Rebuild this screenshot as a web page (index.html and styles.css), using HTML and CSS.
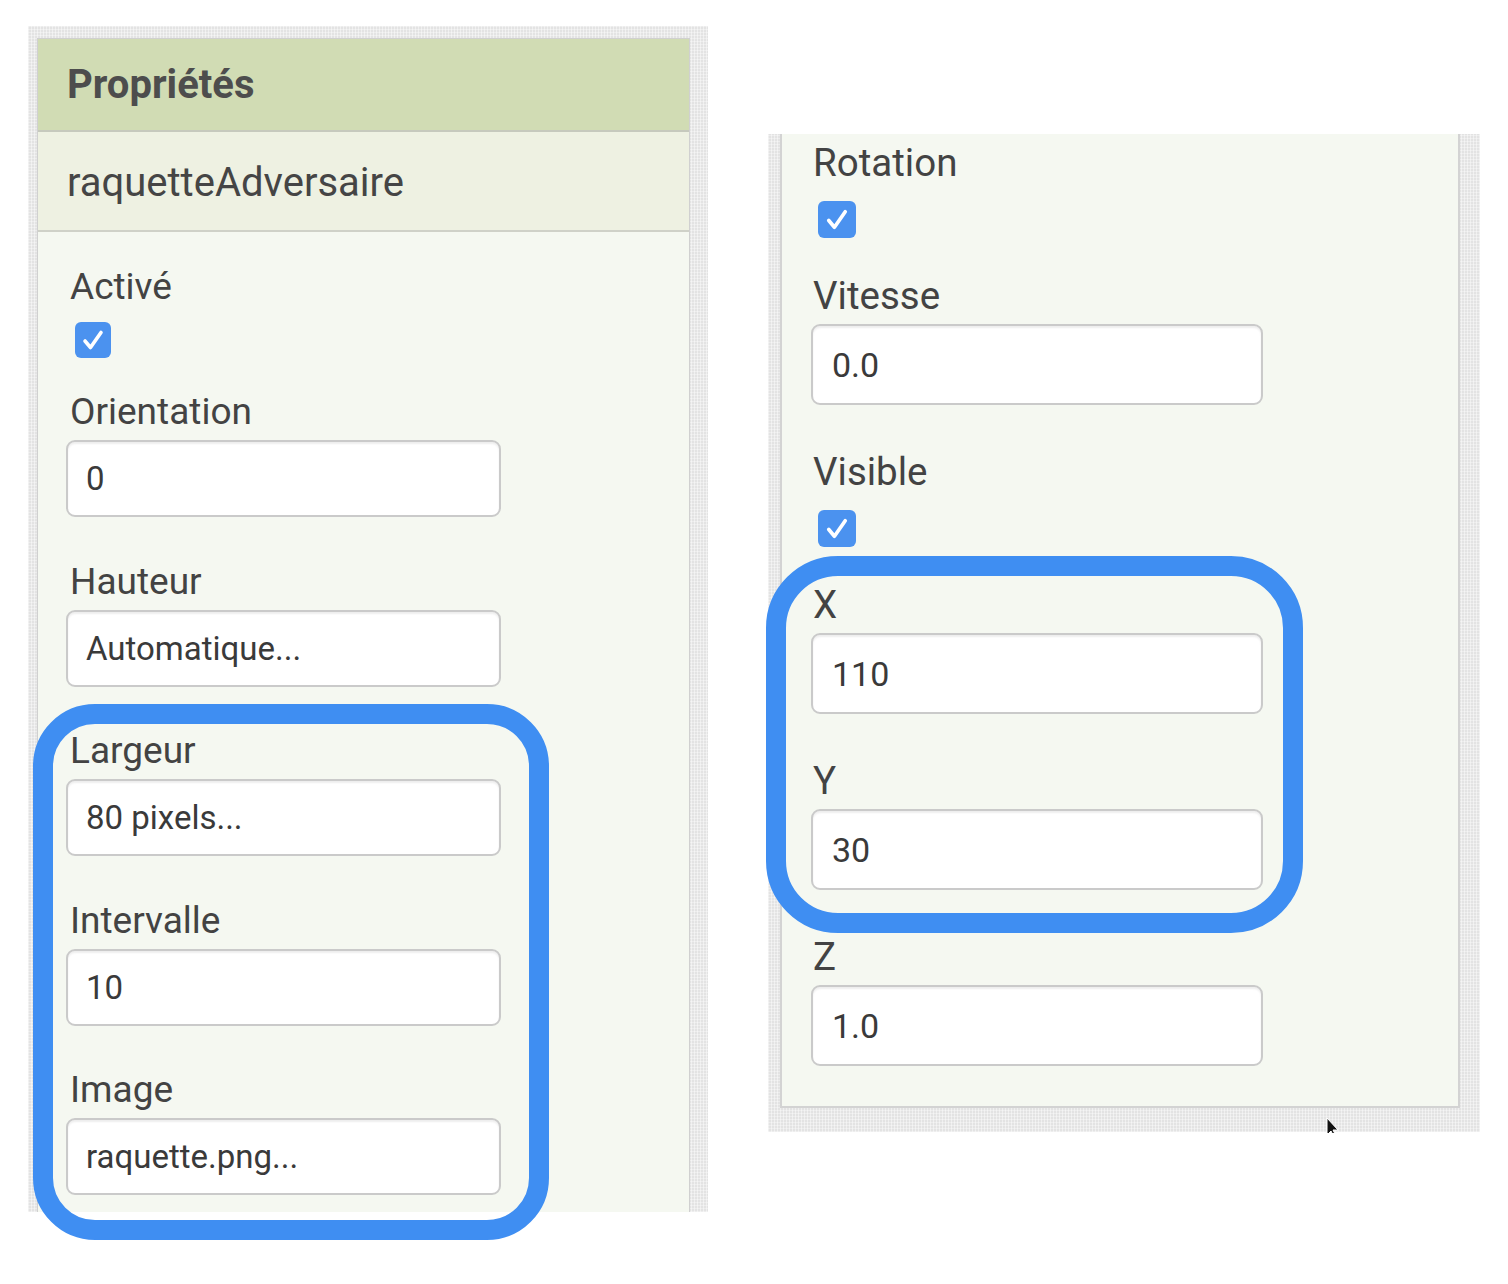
FILE: index.html
```html
<!DOCTYPE html>
<html lang="fr">
<head>
<meta charset="utf-8">
<title>Propriétés</title>
<link rel="stylesheet" href="styles.css">
</head>
<body>
<div class="page">
  <section class="frame frame-left">
    <div class="panel panel-left">
      <div class="panel-head">Propriétés</div>
      <div class="panel-sub">raquetteAdversaire</div>
      <div class="panel-body">
        <div class="field cb-field">
          <div class="label">Activé</div>
          <span class="checkbox"><svg viewBox="0 0 36 36"><path d="M10 19 L15.5 25.5 L26 10.5"/></svg></span>
        </div>
        <div class="field in-field">
          <div class="label">Orientation</div>
          <div class="input">0</div>
        </div>
        <div class="field in-field">
          <div class="label">Hauteur</div>
          <div class="input">Automatique...</div>
        </div>
        <div class="field in-field">
          <div class="label">Largeur</div>
          <div class="input">80 pixels...</div>
        </div>
        <div class="field in-field">
          <div class="label">Intervalle</div>
          <div class="input">10</div>
        </div>
        <div class="field in-field">
          <div class="label">Image</div>
          <div class="input">raquette.png...</div>
        </div>
      </div>
    </div>
  </section>

  <section class="frame frame-right">
    <div class="panel panel-right">
      <div class="panel-body">
        <div class="field cb-field">
          <div class="label">Rotation</div>
          <span class="checkbox"><svg viewBox="0 0 36 36"><path d="M10 19 L15.5 25.5 L26 10.5"/></svg></span>
        </div>
        <div class="field in-field">
          <div class="label">Vitesse</div>
          <div class="input">0.0</div>
        </div>
        <div class="field cb-field">
          <div class="label">Visible</div>
          <span class="checkbox"><svg viewBox="0 0 36 36"><path d="M10 19 L15.5 25.5 L26 10.5"/></svg></span>
        </div>
        <div class="field in-field">
          <div class="label">X</div>
          <div class="input">110</div>
        </div>
        <div class="field in-field">
          <div class="label">Y</div>
          <div class="input">30</div>
        </div>
        <div class="field in-field last">
          <div class="label">Z</div>
          <div class="input">1.0</div>
        </div>
      </div>
    </div>
  </section>

  <div class="highlight hl-left"></div>
  <div class="highlight hl-right"></div>
  <svg class="cursor" viewBox="0 0 14 15"><path d="M1 0 L1 17 L5 13 L8 19 L10 18 L7 12 L12 12 Z"/></svg>
</div>
</body>
</html>
```

FILE: styles.css
```css
html, body {
  margin: 0;
  padding: 0;
  background: #ffffff;
}

body {
  font-family: Roboto, "Liberation Sans", Arial, sans-serif;
  color: #454545;
}

.page {
  position: relative;
  width: 1508px;
  height: 1284px;
  overflow: hidden;
  display: flex;
  align-items: flex-start;
  padding: 26px 0 0 28px;
  box-sizing: border-box;
  gap: 60px;
}

/* textured grey frames */
.frame {
  background-color: #e3e3e3;
  background-image:
    repeating-linear-gradient(90deg, rgba(255,255,255,0.45) 0 1px, transparent 1px 3px),
    repeating-linear-gradient(0deg, rgba(255,255,255,0.35) 0 1px, transparent 1px 3px);
  box-sizing: border-box;
  flex: none;
}

.frame-left {
  width: 680px;
  height: 1186px;
  padding: 12px 18px 0 9px;
  overflow: hidden;
}

.frame-right {
  width: 712px;
  margin-top: 108px;
  padding: 0 20px 24px 12px;
}

.panel {
  background: #f5f8f1;
  box-sizing: border-box;
}

.panel-left {
  width: 653px;
  height: 1174px;
  border: 1px solid #d0d0d0;
  border-bottom: none;
}

.panel-right {
  width: 680px;
  border: 2px solid #d3d3d3;
  border-top: none;
}

.panel-head {
  height: 91px;
  display: flex;
  align-items: center;
  padding-left: 29px;
  background: #d1dcb4;
  border-bottom: 2px solid #c6c9bd;
  font-size: 40px;
  font-weight: 700;
  color: #4d4d4d;
}

.panel-sub {
  height: 100px;
  display: flex;
  align-items: center;
  padding: 3px 0 0 29px;
  box-sizing: border-box;
  background: #eef1e2;
  border-bottom: 2px solid #cfd1c8;
  font-size: 40px;
  color: #454545;
}

.panel-left .panel-body {
  padding: 34px 0 0 28px;
}

.panel-right .panel-body {
  padding: 7px 0 40px 29px;
}

.field {
  display: flex;
  flex-direction: column;
  align-items: flex-start;
}

.label {
  font-size: 37px;
  line-height: 42px;
  margin-left: 4px;
  color: #434343;
}

.checkbox {
  width: 36px;
  height: 36px;
  margin: 14px 0 0 9px;
  border-radius: 6px;
  background: #4b92ef;
  display: flex;
  align-items: center;
  justify-content: center;
}

.checkbox svg {
  width: 100%;
  height: 100%;
}

.checkbox path {
  fill: none;
  stroke: #ffffff;
  stroke-width: 3.6;
  stroke-linecap: round;
  stroke-linejoin: round;
}

.input {
  width: 435px;
  height: 77px;
  margin-top: 7px;
  box-sizing: border-box;
  border: 2px solid #cacaca;
  border-radius: 9px;
  background: #ffffff;
  box-shadow: inset 0 2px 2px rgba(0, 0, 0, 0.07);
  display: flex;
  align-items: center;
  padding-left: 18px;
  font-size: 33px;
  color: #3a3a3a;
}

.cb-field { margin-bottom: 33px; }
.in-field { margin-bottom: 43.5px; }

/* right panel is drawn slightly larger */
.panel-right .label {
  font-size: 38.5px;
  line-height: 44px;
  margin-left: 2px;
}

.panel-right .checkbox {
  width: 38px;
  height: 37px;
  margin: 16px 0 0 7px;
}

.panel-right .input {
  width: 452px;
  height: 81px;
  margin-top: 6px;
  padding-left: 19px;
  font-size: 34px;
}

.panel-right .cb-field { margin-bottom: 36px; }
.panel-right .in-field { margin-bottom: 45px; }
.panel-right .in-field.last { margin-bottom: 0; }

/* blue highlight overlays */
.highlight {
  position: absolute;
  box-sizing: border-box;
  border: 20px solid #3f8ef2;
  pointer-events: none;
}

.hl-left {
  left: 33px;
  top: 704px;
  width: 516px;
  height: 536px;
  border-radius: 62px;
}

.hl-right {
  left: 766px;
  top: 556px;
  width: 537px;
  height: 377px;
  border-radius: 72px;
}

.cursor {
  position: absolute;
  left: 1326px;
  top: 1118px;
  width: 14px;
  height: 15px;
  overflow: hidden;
}

.cursor path {
  fill: #111111;
  stroke: #ffffff;
  stroke-width: 1;
}
```
